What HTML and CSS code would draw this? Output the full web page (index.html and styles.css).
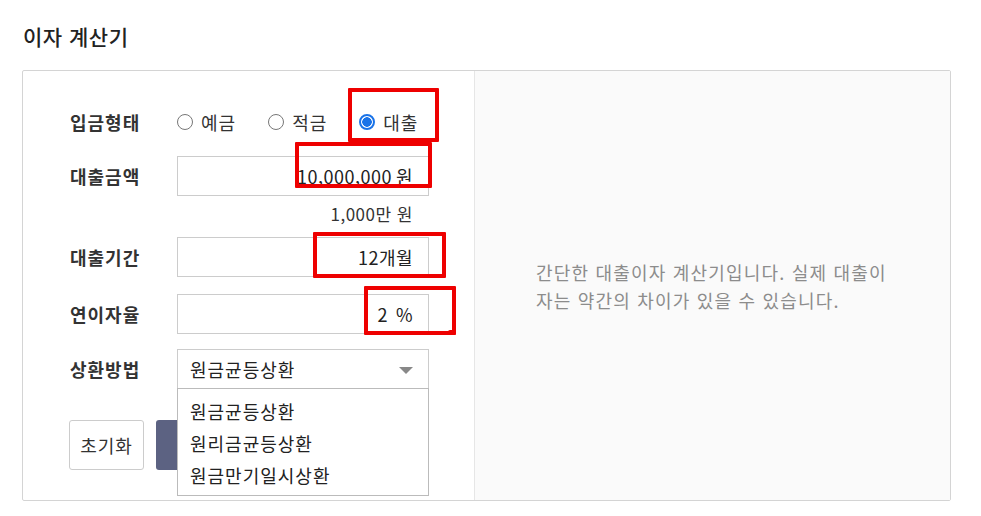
FILE: index.html
```html
<!DOCTYPE html>
<html lang="ko">
<head>
    <meta charset="UTF-8">
    <title>이자 계산기</title>
    <link rel="stylesheet" href="styles.css">
</head>
<body>
    <h1 class="title">이자 계산기</h1>
    <div class="calc">
        <div class="calc-form">
            <div class="row">
                <span class="label">입금형태</span>
                <div class="radios">
                    <label class="radio"><input type="radio" name="kind"> 예금</label>
                    <label class="radio"><input type="radio" name="kind"> 적금</label>
                    <label class="radio"><input type="radio" name="kind" checked> 대출</label>
                </div>
            </div>
            <div class="row">
                <span class="label">대출금액</span>
                <div class="field">
                    <input type="text" value="10,000,000">
                    <span class="unit">원</span>
                </div>
            </div>
            <div class="helper">1,000만 원</div>
            <div class="row row-period">
                <span class="label">대출기간</span>
                <div class="field">
                    <input type="text" value="12">
                    <span class="unit unit-tight">개월</span>
                </div>
            </div>
            <div class="row row-rate">
                <span class="label">연이자율</span>
                <div class="field">
                    <input type="text" value="2">
                    <span class="unit unit-wide">%</span>
                </div>
            </div>
            <div class="row row-repay">
                <span class="label">상환방법</span>
                <div class="select">
                    <span>원금균등상환</span>
                    <i class="arrow"></i>
                    <ul class="options">
                        <li>원금균등상환</li>
                        <li>원리금균등상환</li>
                        <li>원금만기일시상환</li>
                    </ul>
                </div>
            </div>
            <div class="buttons">
                <button class="btn-reset">초기화</button>
                <!-- 드롭다운에 가려진 계산 버튼 -->
                <button class="btn-calc" aria-label="계산하기"></button>
            </div>
        </div>
        <div class="calc-info">
            <p>간단한 대출이자 계산기입니다. 실제 대출이<br>자는 약간의 차이가 있을 수 있습니다.</p>
        </div>

        <!-- 표시용 빨간 박스 -->
        <div class="mark mark-1"></div>
        <div class="mark mark-2"></div>
        <div class="mark mark-3"></div>
        <div class="mark mark-4"></div>
    </div>
</body>
</html>
```

FILE: styles.css
```css
body {
    font-family: "Noto Sans CJK KR", "Noto Sans", sans-serif;
    background: #fff;
    color: #333;
    margin: 0;
    padding: 0;
}

.title {
    margin: 0;
    padding: 21px 0 0 23px;
    height: 70px;
    box-sizing: border-box;
    font-size: 21px;
    font-weight: 500;
    line-height: 30px;
    letter-spacing: 0.5px;
    color: #222;
}

.calc {
    position: relative;
    display: flex;
    width: 929px;
    height: 431px;
    margin-left: 22px;
    box-sizing: border-box;
    border: 1px solid #d4d4d4;
    border-radius: 2px;
}

.calc-form {
    width: 451px;
    padding: 31px 0 0 47px;
    box-sizing: border-box;
}

.row {
    display: flex;
    align-items: center;
    height: 40px;
    margin-bottom: 14px;
}

.label {
    width: 107px;
    font-size: 18px;
    font-weight: 600;
    letter-spacing: 1px;
    color: #333;
}

.radios {
    display: flex;
    gap: 32px;
}

.radio {
    display: flex;
    align-items: center;
    gap: 8px;
    font-size: 18px;
    letter-spacing: 1px;
    color: #333;
}

    .radio input {
        appearance: none;
        flex: none;
        width: 16px;
        height: 16px;
        margin: 0;
        border: 1.5px solid #777;
        border-radius: 50%;
        background: #fff;
    }

        .radio input:checked {
            border: 2px solid #1a73e8;
            background: radial-gradient(circle, #1a73e8 0 4.5px, #fff 5px);
        }

.field {
    display: flex;
    align-items: center;
    width: 252px;
    height: 40px;
    box-sizing: border-box;
    border: 1px solid #ccc;
    padding-right: 15px;
}

    .field input {
        flex: 1;
        min-width: 0;
        border: none;
        outline: none;
        padding: 0;
        text-align: right;
        font-family: inherit;
        font-size: 18px;
        letter-spacing: 0.5px;
        color: #222;
    }

.unit {
    margin-left: 4px;
    font-size: 18px;
    letter-spacing: 0.5px;
    color: #222;
}

.unit-tight {
    margin-left: 0;
}

.unit-wide {
    margin-left: 8px;
}

.helper {
    width: 343px;
    margin: -6px 0 0;
    line-height: 20px;
    text-align: right;
    font-size: 17px;
    letter-spacing: 0.5px;
    color: #333;
}

.row-period {
    margin-top: 13px;
    margin-bottom: 17px;
}

.row-rate {
    margin-bottom: 15px;
}

.row-repay {
    margin-bottom: 31px;
}

.select {
    position: relative;
    display: flex;
    align-items: center;
    width: 252px;
    height: 40px;
    box-sizing: border-box;
    border: 1px solid #ccc;
    padding-left: 12px;
    font-size: 18px;
    letter-spacing: 1px;
    color: #222;
}

.arrow {
    position: absolute;
    right: 15px;
    top: 17px;
    border-left: 7px solid transparent;
    border-right: 7px solid transparent;
    border-top: 7px solid #888;
}

.options {
    position: absolute;
    top: 38px;
    left: -1px;
    z-index: 2;
    width: 252px;
    box-sizing: border-box;
    margin: 0;
    padding: 6px 0 4px;
    list-style: none;
    background: #fff;
    border: 1px solid #bbb;
}

    .options li {
        height: 32px;
        line-height: 32px;
        padding-left: 12px;
        font-size: 18px;
        color: #222;
    }

.buttons {
    display: flex;
    gap: 12px;
    margin-left: -1px;
}

    .buttons button {
        height: 50px;
        border-radius: 3px;
        font-family: inherit;
        font-size: 18px;
        letter-spacing: 1px;
        cursor: pointer;
    }

.btn-reset {
    width: 75px;
    background: #fff;
    border: 1px solid #ccc;
    color: #333;
}

.btn-calc {
    width: 110px;
    background: #5c6282;
    border: none;
    color: #fff;
}

.calc-info {
    flex: 1;
    display: flex;
    align-items: center;
    padding: 0 0 0 61px;
    background: #fafafa;
    border-left: 1px solid #e6e6e6;
}

    .calc-info p {
        margin: 0;
        font-size: 18px;
        line-height: 28px;
        letter-spacing: 1.2px;
        color: #8c8c8c;
    }

.mark {
    position: absolute;
    box-sizing: border-box;
    border: 4px solid #ee0000;
    border-radius: 1px;
}

.mark-1 { left: 325px; top: 17px; width: 91px; height: 54px; }
.mark-2 { left: 272px; top: 71px; width: 137px; height: 46px; }
.mark-3 { left: 290px; top: 161px; width: 133px; height: 46px; }
.mark-4 { left: 341px; top: 215px; width: 92px; height: 49px; }

    .mark-4::after {
        content: "";
        position: absolute;
        right: -4px;
        bottom: -4px;
        width: 8px;
        height: 5px;
        background: #ee0000;
        border-radius: 2px;
    }
```
